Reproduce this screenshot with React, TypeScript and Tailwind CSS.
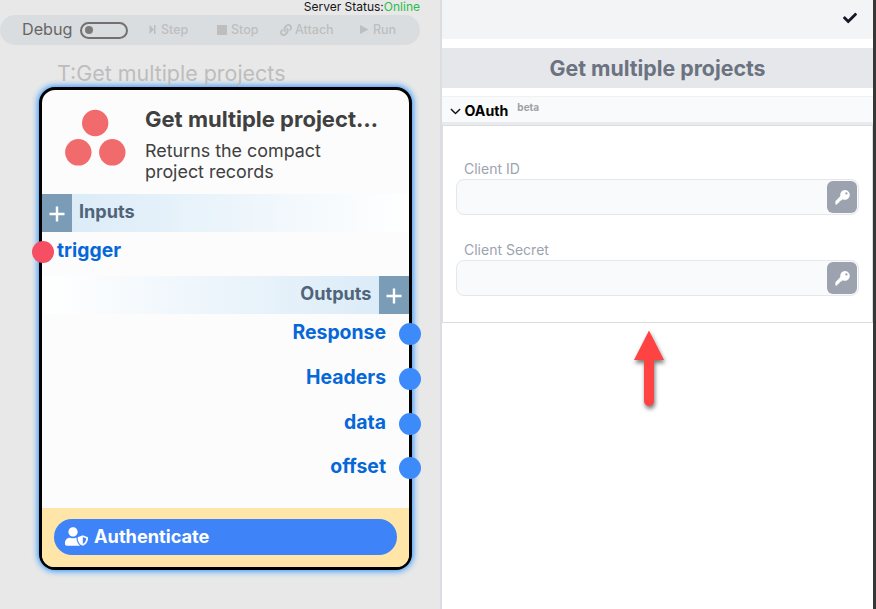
import { FaCheck, FaLink, FaUserShield } from "react-icons/fa";
import { BsChevronDown } from "react-icons/bs";

const outputs = ["Response", "Headers", "data", "offset"];

function DebugBar() {
  return (
    <div className="flex h-[30px] w-[420px] items-center rounded-full bg-[#d9dde0] pl-[22px] text-[12.5px] font-medium text-[#bebebe]">
      <span className="mb-px w-[58px] text-[16.2px] font-normal text-[#666]">Debug</span>
      <span className="flex h-[17px] w-[48px] shrink-0 items-center rounded-full border-2 border-[#757070] pl-[3px]">
        <span className="h-2 w-2 rounded-full bg-[#7b7b7b]" />
      </span>
      <span className="ml-[21px] flex w-[68px] items-center">
        <svg width="7" height="9" viewBox="0 0 7 9" fill="currentColor" className="mr-[5px] mb-px">
          <path d="M.5 0v9L5 4.5zM5 0h1.5v9H5z" />
        </svg>
        Step
      </span>
      <span className="flex w-[63px] items-center">
        <span className="mr-[4px] mb-px h-[10px] w-[10px] bg-[#bebebe]" />
        Stop
      </span>
      <span className="flex w-[80px] items-center">
        <FaLink className="mr-[3px] mb-px h-[12px] w-[12px]" />
        Attach
      </span>
      <span className="flex items-center">
        <svg width="9" height="9" viewBox="0 0 9 9" fill="currentColor" className="mr-[4px] mb-px">
          <path d="M0 0v9l8.5-4.5z" />
        </svg>
        Run
      </span>
    </div>
  );
}

function Plus() {
  return (
    <span className="flex h-full w-[30px] shrink-0 items-center justify-center bg-[#7b9cb7] pt-[2px]">
      <svg width="16" height="16" viewBox="0 0 16 16" stroke="white" strokeWidth="2.4">
        <path d="M.5 8h15M8 .5v15" />
      </svg>
    </span>
  );
}

function NodeCard() {
  return (
    <div className="ml-[39px] flex h-[483px] w-[373px] flex-col rounded-[16px] border-[3px] border-black bg-[#fcfcfc] shadow-[0_0_6px_1px_#2490ff]">
      <div className="flex h-[104px] shrink-0 pl-[23px]">
        <svg width="61" height="57" viewBox="0 0 61 57" fill="#f16b6c" className="mt-[19px] shrink-0">
          <circle cx="30.2" cy="14" r="13.2" />
          <circle cx="13.3" cy="43.3" r="13.2" />
          <circle cx="47.3" cy="43.3" r="13.2" />
        </svg>
        <div className="ml-[19px] whitespace-nowrap text-[#404040]">
          <h2 className="mt-[13px] text-[22px] leading-[32px] font-bold">Get multiple project…</h2>
          <p className="mt-[5px] text-[17.9px] leading-[21px]">
            Returns the compact
            <br />
            project records
          </p>
        </div>
      </div>
      <div className="flex h-[38px] shrink-0 bg-linear-to-r from-[#d8eaf7] to-white">
        <Plus />
        <span className="pt-[4px] pl-[7px] text-[18.1px] leading-[26px] font-bold text-[#50647a]">Inputs</span>
      </div>
      <div className="flex h-[44px] shrink-0 items-start pt-[9px]">
        <span className="-ml-[10px] h-[22px] w-[22px] rounded-full bg-[#f64f64]" />
        <span className="-mt-[4px] ml-[3px] text-[19.3px] leading-[26px] font-bold text-[#0667d8]">trigger</span>
      </div>
      <div className="flex h-[38px] shrink-0 justify-end bg-linear-to-l from-[#d8eaf7] to-white">
        <span className="pt-[4px] pr-[7.5px] text-[18.1px] leading-[26px] font-bold text-[#50647a]">Outputs</span>
        <Plus />
      </div>
      <div className="flex flex-1 flex-col pt-[9px]">
        {outputs.map((name) => (
          <div key={name} className="-mr-[12px] flex h-[44.8px] items-start justify-end">
            <span className="-mt-[4px] text-[19.4px] leading-[26px] font-bold text-[#0667d8]">{name}</span>
            <span className="ml-[13px] h-[22px] w-[22px] rounded-full bg-[#3d8bfb]" />
          </div>
        ))}
      </div>
      <div className="h-[59.5px] shrink-0 rounded-b-[12px] bg-[#ffe6a8] px-[12px] pt-[11.5px]">
        <div className="flex h-[36px] items-center rounded-full bg-[#3e83f8] pb-px pl-[11px] text-[18.2px] font-bold text-white">
          <FaUserShield className="mr-[6px] h-[19px] w-[23px]" />
          Authenticate
        </div>
      </div>
    </div>
  );
}

function KeyIcon() {
  return (
    <svg width="15" height="15" viewBox="0 0 15 15" fill="currentColor" fillRule="evenodd">
      <path d="M10.1 0a4.8 4.8 0 0 0-4.7 6L.4 11.2v3.4h1.8l.5-1.6 1.6-.4.4-1.6 1.6-.5 1.2-1.3A4.9 4.9 0 1 0 10.1 0m1.3 2.3a1.15 1.15 0 1 1 0 2.3 1.15 1.15 0 0 1 0-2.3" />
    </svg>
  );
}

function Field({ label }: { label: string }) {
  return (
    <label className="block h-[81px]">
      <span className="block pl-[8px] text-[14px] leading-[20px] text-[#9ca3af]">{label}</span>
      <span className="flex h-[36px] items-center justify-end rounded-[8px] border border-[#e5e7eb] bg-[#f9fafb] pr-px">
        <span className="flex h-[32px] w-[30px] items-center justify-center rounded-[6px] bg-[#9ca3af] text-white">
          <KeyIcon />
        </span>
      </span>
    </label>
  );
}

export default function App() {
  return (
    <div className="flex h-[609px] w-[876px] overflow-hidden bg-white font-['Inter',sans-serif]">
      <div className="w-[442px] shrink-0 border-r-2 border-[#dadde1] bg-[#e8e8e8]">
        <div className="h-[15px] pr-[20px] text-right text-[12px] leading-[14px] text-[#151515]">
          Server Status:<span className="text-[#28bd4c]">Online</span>
        </div>
        <DebugBar />
        <div className="mt-[14px] h-[28px] pl-[57px] text-[21.45px] leading-[28px] text-[#bdbdbd]">
          T:Get multiple projects
        </div>
        <NodeCard />
      </div>
      <div className="w-[431px] shrink-0">
        <div className="flex h-[39px] justify-end bg-[#f3f4f6] pt-[11px] pr-[16px]">
          <FaCheck className="h-[14px] w-[14px] text-[#111827]" />
        </div>
        <h1 className="mt-[9px] h-[40px] bg-[#e5e7eb] text-center text-[21.3px] leading-[40px] font-bold text-[#6b7280]">
          Get multiple projects
        </h1>
        <div className="mt-[8px] flex h-[29px] items-center border-t border-b-[3px] border-t-[#f0f1f3] border-b-[#e9eaef] bg-[#f9fafb] pl-[8px]">
          <BsChevronDown className="mt-[4px] h-[11px] w-[11px] stroke-[1.3]" />
          <span className="mt-[2px] ml-[3.5px] text-[14.2px] font-bold">OAuth</span>
          <span className="-mt-[5px] ml-[9px] text-[10px] font-bold text-[#a0a0a5]">beta</span>
        </div>
        <div className="h-[198px] border border-[#dcdde1] bg-white px-[13px] pt-[33px]">
          <Field label="Client ID" />
          <Field label="Client Secret" />
        </div>
        <svg width="50" height="95" viewBox="0 0 50 95" className="mt-[2px] ml-[182px] drop-shadow-[1px_3px_2px_#0008]">
          <path d="M25 5.5 40 35H30v41a5 5 0 0 1-10 0V35H10z" fill="#ff4343" />
        </svg>
      </div>
      <div className="w-[3px] shrink-0 bg-[#373737]" />
    </div>
  );
}
